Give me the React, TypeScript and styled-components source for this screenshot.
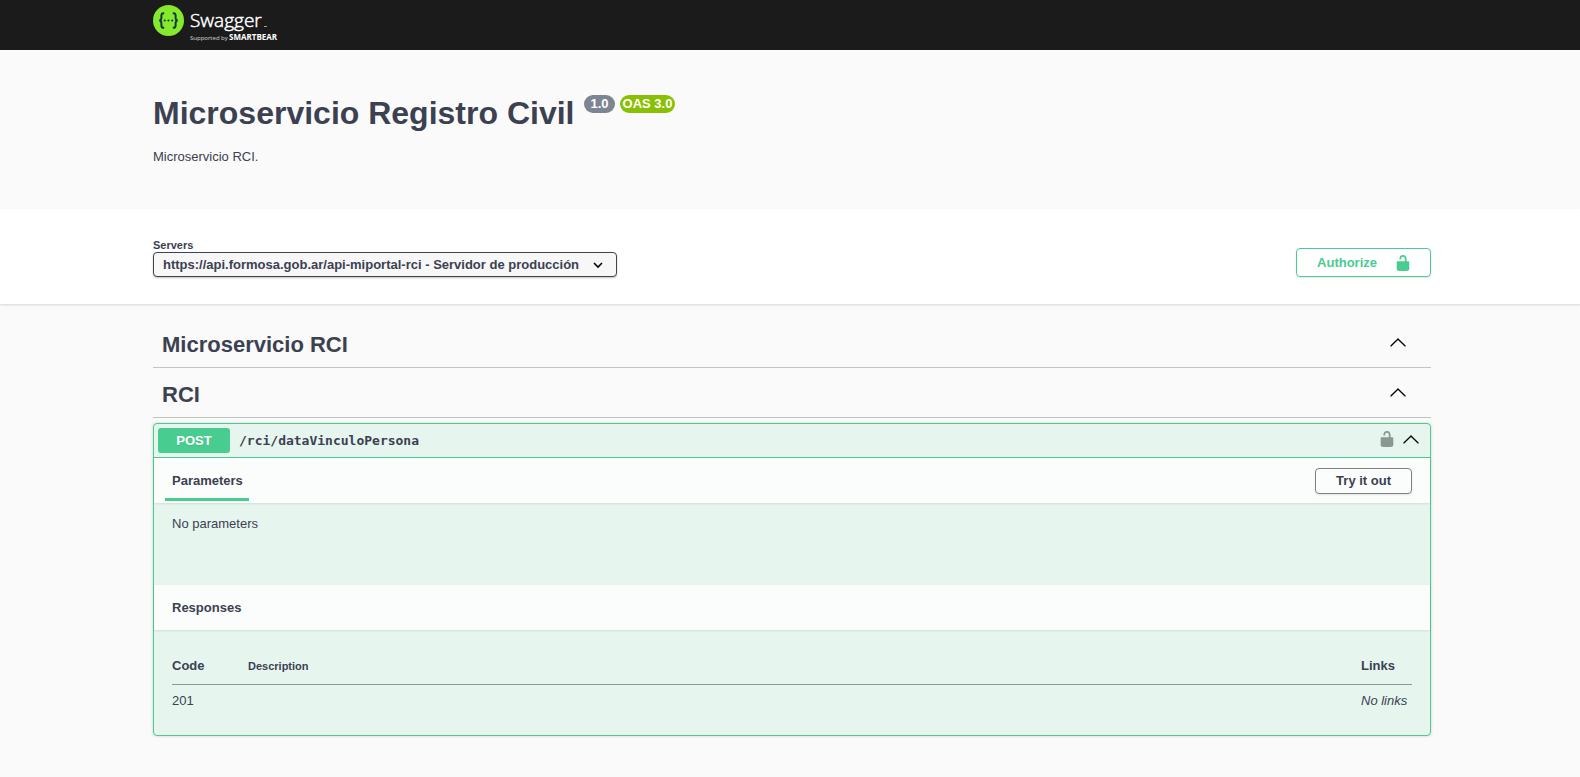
import React from "react";
import styled, { createGlobalStyle } from "styled-components";

const ink = "#3b4151";
const green = "#49cc90";
const sans = `"Liberation Sans", Arial, sans-serif`;

const GlobalStyle = createGlobalStyle`
  *, *::before, *::after { box-sizing: border-box; }
  body {
    margin: 0;
    background: #fafafa;
    color: ${ink};
    font-family: ${sans};
    font-size: 13px;
    line-height: 16px;
  }
  h1, h2, h3, h4, p { margin: 0; }
  button, select { font-family: inherit; color: inherit; }
  button { cursor: pointer; }
`;

const Wrapper = styled.div`
  width: 100%;
  max-width: 1314px;
  margin: 0 auto;
  padding: 0 16px 0 20px;
`;

const Topbar = styled.header`
  background: #1b1b1b;
  height: 50px;
`;

const LogoLink = styled.a`
  display: inline-flex;
  padding-top: 4px;
  text-decoration: none;
`;

const Info = styled.section`
  padding: 43px 0 44px;
`;

const TitleRow = styled.div`
  display: flex;
  align-items: flex-start;
  gap: 5px;
  margin-bottom: 16px;
`;

const Title = styled.h1`
  padding-right: 5px;
  font-size: 32px;
  line-height: 40px;
  font-weight: 700;
`;

const Badge = styled.span<{ $color: string; $pad: number }>`
  margin-top: 2px;
  padding: 0 ${(p) => p.$pad}px;
  border-radius: 10px;
  background: ${(p) => p.$color};
  color: #fff;
  font-size: 13px;
  line-height: 18px;
  font-weight: 700;
`;

const SchemeBand = styled.section`
  background: #fff;
  box-shadow: 0 1px 2px rgba(0, 0, 0, 0.15);
  padding: 29px 0 27px;
`;

const SchemeRow = styled.div`
  display: flex;
  justify-content: space-between;
  align-items: flex-end;
`;

const ServerField = styled.label`
  display: grid;
  grid-template-columns: 464px;
  font-size: 11px;
  line-height: 14px;
  font-weight: 700;
`;

const SelectBox = styled.span`
  display: grid;
  align-items: center;
  > * { grid-area: 1 / 1; }
  > svg { justify-self: end; margin-right: 14px; pointer-events: none; }
`;

const ServerSelect = styled.select`
  appearance: none;
  width: 100%;
  height: 25px;
  padding: 0 36px 0 9px;
  border: 1px solid #41444e;
  border-radius: 4px;
  background: #f7f7f7;
  box-shadow: 0 1px 2px rgba(0, 0, 0, 0.25);
  font-size: 13px;
  font-weight: 700;
`;

const OutlineButton = styled.button`
  display: inline-flex;
  align-items: center;
  height: 26px;
  padding: 0 20px;
  border: 1px solid gray;
  border-radius: 4px;
  background: transparent;
  box-shadow: 0 1px 2px rgba(0, 0, 0, 0.1);
  font-size: 13px;
  font-weight: 700;
`;

const AuthorizeButton = styled(OutlineButton)`
  gap: 17px;
  height: 29px;
  padding: 0 18px 0 20px;
  border-color: ${green};
  color: ${green};
`;

const Operations = styled.main`
  padding: 14px 0 40px;
`;

const TagHeader = styled.div`
  display: flex;
  align-items: center;
  justify-content: space-between;
  height: 50px;
  padding: 0 24px 0 9px;
  border-bottom: 1px solid rgba(59, 65, 81, 0.3);
  > button { margin-bottom: 2px; }
`;

const TagTitle = styled.h3`
  padding-top: 4px;
  font-size: 22px;
  line-height: 26px;
  font-weight: 700;
`;

const IconButton = styled.button`
  display: inline-flex;
  padding: 0;
  border: 0;
  background: none;
`;

const Opblock = styled.article`
  margin-top: 5px;
  border: 1px solid ${green};
  border-radius: 4px;
  background: rgba(73, 204, 144, 0.1);
  box-shadow: 0 0 3px rgba(0, 0, 0, 0.19);
`;

const Summary = styled.div`
  display: flex;
  align-items: center;
  height: 34px;
  padding: 0 10px 0 4px;
  border-bottom: 1px solid ${green};
`;

const Method = styled.span`
  width: 72px;
  border-radius: 3px;
  background: ${green};
  color: #fff;
  font-weight: 700;
  line-height: 25px;
  text-align: center;
  text-shadow: 0 1px 0 rgba(0, 0, 0, 0.1);
`;

const Path = styled.span`
  flex: 1;
  padding-left: 9px;
  font-family: "DejaVu Sans Mono", monospace;
  font-size: 13px;
  font-weight: 700;
`;

const SummaryActions = styled.div`
  display: flex;
  gap: 6px;
  margin-bottom: 3px;
`;

const SectionHeader = styled.div`
  display: flex;
  align-items: center;
  justify-content: space-between;
  height: 45px;
  padding: 0 18px;
  background: rgba(255, 255, 255, 0.8);
  box-shadow: 0 1px 2px rgba(0, 0, 0, 0.1);
`;

const SectionTitle = styled.h4`
  font-size: 13px;
  line-height: 17px;
  font-weight: 700;
`;

const Tab = styled.div`
  align-self: flex-end;
  margin: 0 0 2px -7px;
  padding: 0 6px 9px 7px;
  border-bottom: 3px solid ${green};
`;

const EmptyParameters = styled.div`
  height: 82px;
  padding: 13px 18px;
`;

const ResponsesBody = styled.div`
  padding: 18px;
`;

const ResponsesTable = styled.table`
  width: 100%;
  border-collapse: collapse;
  table-layout: fixed;

  th, td { padding: 0; text-align: left; }
  th {
    height: 36px;
    border-bottom: 1px solid rgba(59, 65, 81, 0.3);
  }
  td { height: 33px; }
`;

const HeadCell = styled.th<{ $width?: number; $small?: boolean }>`
  width: ${(p) => (p.$width ? `${p.$width}px` : "auto")};
  font-size: ${(p) => (p.$small ? 11 : 13)}px;
`;

const Lock = ({ color }: { color: string }) => (
  <svg width="18" height="18" viewBox="0 0 20 20" fill={color} aria-hidden="true">
    <path d="M15.8 8H14V5.6C14 2.703 12.665 1 10 1 7.334 1 6 2.703 6 5.6V6h2v-.801C8 3.754 8.797 3 10 3c1.203 0 2 .754 2 2.199V8H4c-.553 0-1 .646-1 1.199V17c0 .549.428 1.139.951 1.307l1.197.387C5.672 18.861 6.55 19 7.1 19h5.8c.549 0 1.428-.139 1.951-.307l1.196-.387c.524-.167.953-.757.953-1.306V9.199C17 8.646 16.352 8 15.8 8z" />
  </svg>
);

const ArrowUp = () => (
  <svg width="18" height="18" viewBox="0 0 20 20" fill="#000" aria-hidden="true">
    <path d="M17.418 14.908c.272.268.709.268.979 0s.271-.701 0-.969l-7.908-7.83c-.27-.268-.707-.268-.979 0l-7.908 7.83c-.27.268-.27.701 0 .969.271.268.709.268.979 0L10 7.767l7.418 7.141z" />
  </svg>
);

const SwaggerLogo = () => (
  <svg width="130" height="42" viewBox="0 0 130 42" role="img" aria-label="Swagger">
    <circle cx="15.5" cy="16.5" r="15.5" fill="#85ea2d" />
    <g fill="none" stroke="#173647" strokeWidth="2">
      <path d="M11.2 9.2H10.6C8.9 9.2 8.4 10 8.4 11.6V13.8C8.4 15.6 7.8 16.5 6.2 16.5C7.8 16.5 8.4 17.4 8.4 19.2V21.4C8.4 23 8.9 23.8 10.6 23.8H11.2" />
      <path d="M19.8 9.2H20.4C22.1 9.2 22.6 10 22.6 11.6V13.8C22.6 15.6 23.2 16.5 24.8 16.5C23.2 16.5 22.6 17.4 22.6 19.2V21.4C22.6 23 22.1 23.8 20.4 23.8H19.8" />
    </g>
    <g fill="#173647">
      <circle cx="11.8" cy="16.5" r="1.1" />
      <circle cx="15.5" cy="16.5" r="1.1" />
      <circle cx="19.2" cy="16.5" r="1.1" />
    </g>
    <g fill="#fff" fontFamily="Open Sans, sans-serif">
      <text x="37" y="23" fontSize="19" fontWeight="300" stroke="#fff" strokeWidth="0.5">Swagger</text>
      <rect x="111" y="22" width="3" height="1" opacity="0.6" />
      <text x="37" y="36" fontSize="6" opacity="0.8">Supported by</text>
      <text x="76" y="36" fontSize="8" fontWeight="700">SMARTBEAR</text>
    </g>
  </svg>
);

export default function App() {
  return (
    <>
      <GlobalStyle />
      <Topbar>
        <Wrapper>
          <LogoLink href="#"><SwaggerLogo /></LogoLink>
        </Wrapper>
      </Topbar>

      <Wrapper>
        <Info>
          <TitleRow>
            <Title>Microservicio Registro Civil</Title>
            <Badge $color="#7d8492" $pad={6}>1.0</Badge>
            <Badge $color="#89bf04" $pad={3}>OAS 3.0</Badge>
          </TitleRow>
          <p>Microservicio RCI.</p>
        </Info>
      </Wrapper>

      <SchemeBand>
        <Wrapper>
          <SchemeRow>
            <ServerField>
              Servers
              <SelectBox>
                <ServerSelect>
                  <option>https://api.formosa.gob.ar/api-miportal-rci - Servidor de producción</option>
                </ServerSelect>
                <svg width="10" height="8" viewBox="0 0 10 8" fill="none" stroke="#000" strokeWidth="1.6" aria-hidden="true">
                  <path d="M1 2l4 4 4-4" />
                </svg>
              </SelectBox>
            </ServerField>
            <AuthorizeButton>
              Authorize
              <Lock color={green} />
            </AuthorizeButton>
          </SchemeRow>
        </Wrapper>
      </SchemeBand>

      <Wrapper>
        <Operations>
          <TagHeader>
            <TagTitle>Microservicio RCI</TagTitle>
            <IconButton aria-label="Collapse Microservicio RCI"><ArrowUp /></IconButton>
          </TagHeader>
          <TagHeader>
            <TagTitle>RCI</TagTitle>
            <IconButton aria-label="Collapse RCI"><ArrowUp /></IconButton>
          </TagHeader>

          <Opblock>
            <Summary>
              <Method>POST</Method>
              <Path>/rci/dataVinculoPersona</Path>
              <SummaryActions>
                <IconButton aria-label="Authorization"><Lock color="#8b9892" /></IconButton>
                <IconButton aria-label="Collapse operation"><ArrowUp /></IconButton>
              </SummaryActions>
            </Summary>

            <SectionHeader>
              <Tab><SectionTitle>Parameters</SectionTitle></Tab>
              <OutlineButton>Try it out</OutlineButton>
            </SectionHeader>
            <EmptyParameters>
              <p>No parameters</p>
            </EmptyParameters>

            <SectionHeader>
              <SectionTitle>Responses</SectionTitle>
            </SectionHeader>
            <ResponsesBody>
              <ResponsesTable>
                <thead>
                  <tr>
                    <HeadCell $width={76}>Code</HeadCell>
                    <HeadCell $small>Description</HeadCell>
                    <HeadCell $width={51}>Links</HeadCell>
                  </tr>
                </thead>
                <tbody>
                  <tr>
                    <td>201</td>
                    <td />
                    <td><i>No links</i></td>
                  </tr>
                </tbody>
              </ResponsesTable>
            </ResponsesBody>
          </Opblock>
        </Operations>
      </Wrapper>
    </>
  );
}
